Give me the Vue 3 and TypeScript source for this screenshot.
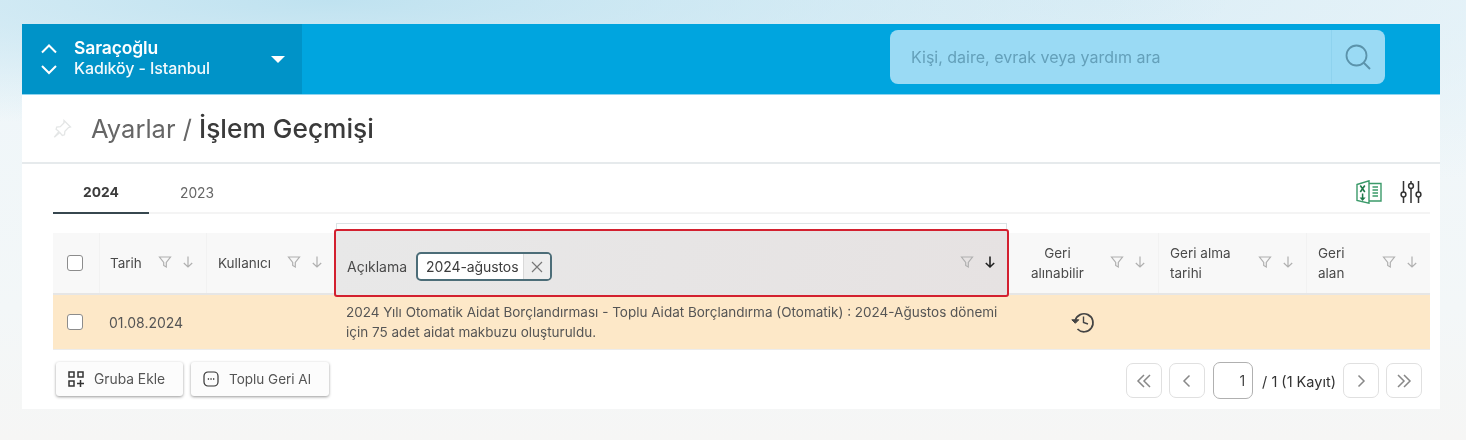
<script setup lang="ts">
interface Column { label: string[]; align?: string }
const columns: Column[] = [
  { label: ['Geri', 'alınabilir'], align: 'center' },
  { label: ['Geri alma', 'tarihi'] },
  { label: ['Geri', 'alan'] },
]
</script>

<template>
  <div class="page">
    <div class="card">
      <header class="topbar">
        <div class="site">
          <div class="arrows">
            <svg width="18" height="11" viewBox="0 0 18 11"><path d="M2 9.500l7-7 7 7" fill="none" stroke="#fff" stroke-width="2" /></svg>
            <svg width="18" height="11" viewBox="0 0 18 11"><path d="M2 2l7 7 7-7" fill="none" stroke="#fff" stroke-width="2" /></svg>
          </div>
          <div class="site-text">
            <div class="site-name">Saraçoğlu</div>
            <div class="site-place">Kadıköy - Istanbul</div>
          </div>
          <span class="caret"></span>
        </div>
        <div class="search">
          <span class="search-text">Kişi, daire, evrak veya yardım ara</span>
          <span class="search-btn">
            <svg width="28" height="28" viewBox="0 0 28 28"><circle cx="12.5" cy="12.5" r="10" fill="none" stroke="#5b93ab" stroke-width="1.8" /><path d="M19.5 19.5l6.500 6.500" stroke="#5b93ab" stroke-width="2" fill="none" /></svg>
          </span>
        </div>
      </header>

      <div class="titlebar">
        <svg class="pin" width="20" height="20" viewBox="0 0 20 20"><path d="M12 1.500l6.500 6.500-2 .6-3.600 3.600-.4 3.600-2.200.6-2.400-2.800-5.600 4.600 4.600-5.600-2.800-2.400.6-2.200 3.600-.4 3.600-3.600z" fill="none" stroke="#e4e6e6" stroke-width="1.300" /></svg>
        <h1 class="title"><span class="crumb">Ayarlar / </span>İşlem Geçmişi</h1>
      </div>

      <div class="content">
        <div class="tabs">
          <div class="tab active">2024</div>
          <div class="tab">2023</div>
          <div class="tools">
            <svg width="26" height="24" viewBox="0 0 26 24">
              <path d="M1 4.500L13 .8v22.400L1 20.500z" fill="#fff" stroke="#3b9a6a" stroke-width="1.400" />
              <path d="M13 3.500h12v17.500H13" fill="none" stroke="#3b9a6a" stroke-width="1.400" />
              <path d="M16.500 7h5.500M16.500 10h5.500M16.500 13h5.500M16.500 16h5.500" stroke="#3b9a6a" stroke-width="1.300" />
              <path d="M4.300 5.500l4.500 6.500M8.800 5.500l-4.500 6.500" stroke="#1f7a4a" stroke-width="1.600" />
              <path d="M6.600 13.500v5" stroke="#1f7a4a" stroke-width="1.500" />
              <path d="M3.600 17.500h6l-3 3.500z" fill="#1f7a4a" />
            </svg>
            <svg width="22" height="24" viewBox="0 0 22 24" fill="none" stroke="#333" stroke-width="1.500">
              <path d="M3.500 1v11M3.500 17v6M11 1v2.500M11 8.500V23M18.500 1v11M18.500 17v6" />
              <circle cx="3.500" cy="14.500" r="2.400" />
              <circle cx="11" cy="6" r="2.400" />
              <circle cx="18.500" cy="14.500" r="2.400" />
            </svg>
          </div>
        </div>

        <div class="table">
          <div class="head-row">
            <div class="cell check-cell"><span class="checkbox"></span></div>
            <div class="cell head-cell tarih">
              <span class="head-label">Tarih</span>
              <span class="head-icons">
                <svg class="ic" viewBox="0 0 14 14"><path d="M1.500 2h11L8.300 7.500v4.500L5.700 10.500v-3z" /></svg>
                <svg class="ic" viewBox="0 0 14 14"><path d="M7 1.500v10.500M2.800 8l4.200 4 4.200-4" /></svg>
              </span>
            </div>
            <div class="cell head-cell">
              <span class="head-label">Kullanıcı</span>
              <span class="head-icons">
                <svg class="ic" viewBox="0 0 14 14"><path d="M1.500 2h11L8.300 7.500v4.500L5.700 10.500v-3z" /></svg>
                <svg class="ic" viewBox="0 0 14 14"><path d="M7 1.500v10.500M2.800 8l4.200 4 4.200-4" /></svg>
              </span>
            </div>
            <div class="cell head-cell desc-head">
              <div class="desc-top"></div>
              <div class="desc-box">
                <span class="desc-label">Açıklama</span>
                <span class="chip"><span class="chip-text">2024-ağustos</span><span class="chip-x"><svg width="12" height="12" viewBox="0 0 12 12"><path d="M1 1l10 10M11 1L1 11" stroke="#777" stroke-width="1.200" /></svg></span></span>
                <span class="head-icons desc-icons">
                  <svg class="ic" viewBox="0 0 14 14"><path d="M1.500 2h11L8.300 7.500v4.500L5.700 10.500v-3z" /></svg>
                  <svg class="ic dark" viewBox="0 0 14 14"><path d="M7 1.500v10.500M2.800 8l4.200 4 4.200-4" /></svg>
                </span>
              </div>
            </div>
            <div v-for="c in columns" :key="c.label.join()" class="cell head-cell">
              <span class="head-label" :class="{ centered: c.align === 'center' }"><span v-for="l in c.label" :key="l" class="line">{{ l }}</span></span>
              <span class="head-icons">
                <svg class="ic" viewBox="0 0 14 14"><path d="M1.500 2h11L8.300 7.500v4.500L5.700 10.500v-3z" /></svg>
                <svg class="ic" viewBox="0 0 14 14"><path d="M7 1.500v10.500M2.800 8l4.200 4 4.200-4" /></svg>
              </span>
            </div>
          </div>
          <div class="body-row">
            <div class="cell check-cell"><span class="checkbox"></span></div>
            <div class="cell date">01.08.2024</div>
            <div class="cell"></div>
            <div class="cell desc">2024 Yılı Otomatik Aidat Borçlandırması - Toplu Aidat Borçlandırma (Otomatik) : 2024-Ağustos dönemi için 75 adet aidat makbuzu oluşturuldu.</div>
            <div class="cell restore">
              <svg width="24" height="24" viewBox="0 0 24 24" fill="none" stroke="#444" stroke-width="1.700">
                <path d="M4.300 10.500A9 9 0 1 1 6.500 19" />
                <path d="M.8 9.800l3.500 3.500 3.500-3.500z" fill="#444" stroke-width="1" />
                <path d="M12.500 6.500v6l4.500 1.500" stroke-width="1.400" />
              </svg>
            </div>
            <div class="cell"></div>
            <div class="cell"></div>
          </div>
        </div>

        <div class="footer">
          <div class="actions">
            <button class="act first">
              <svg width="16" height="16" viewBox="0 0 16 16" fill="none" stroke="#333" stroke-width="1.500"><rect x="1" y="1" width="5" height="5" /><rect x="10" y="1" width="5" height="5" /><rect x="1" y="10" width="5" height="5" /><path d="M12.500 9v7M9 12.500h7" /></svg>
              Gruba Ekle
            </button>
            <button class="act wide">
              <svg width="16" height="16" viewBox="0 0 16 16" fill="none" stroke="#333" stroke-width="1.200"><rect x="1" y="1" width="14" height="14" rx="4" /><path d="M4.800 8h1.300M7.400 8h1.300M10 8h1.300" stroke-width="1.400" /></svg>
              Toplu Geri Al
            </button>
          </div>
          <div class="pager">
            <button class="pg"><svg width="18" height="16" viewBox="0 0 18 16" class="chev"><path d="M9 2L3 8l6 6M15 2L9 8l6 6" /></svg></button>
            <button class="pg"><svg width="18" height="16" viewBox="0 0 18 16" class="chev"><path d="M11.500 2.500L6 8l5.500 5.500" /></svg></button>
            <span class="page-input">1</span>
            <span class="page-info">/ 1 (1 Kayıt)</span>
            <button class="pg next"><svg width="18" height="16" viewBox="0 0 18 16" class="chev"><path d="M6.500 2.500L12 8l-5.500 5.500" /></svg></button>
            <button class="pg"><svg width="18" height="16" viewBox="0 0 18 16" class="chev"><path d="M3 2l6 6-6 6M9 2l6 6-6 6" /></svg></button>
          </div>
        </div>
      </div>
    </div>
  </div>
</template>

<style>
html, body { margin: 0; }
</style>

<style scoped>
.page {
  width: 1466px;
  height: 440px;
  box-sizing: border-box;
  padding: 24px 26px 0 22px;
  overflow: hidden;
  font-family: Inter, "Liberation Sans", sans-serif;
  background:
    radial-gradient(ellipse 900px 130px at 330px 0, #bfe2f0 0%, rgba(191, 226, 240, 0) 100%),
    radial-gradient(ellipse 800px 200px at 1100px 0, #dceef6 0%, rgba(220, 238, 246, 0) 100%),
    linear-gradient(180deg, #eef6fa 0%, #f3f7f8 70%, #f6f6f5 100%);
}
.card { background: #fff; height: 385px; filter: blur(0.35px); }
.topbar {
  height: 70px;
  background: #00a5df;
  display: flex;
  justify-content: space-between;
  border-bottom: 1px solid #8fd4ef;
  box-sizing: content-box;
}
.site {
  width: 280px;
  box-sizing: border-box;
  background: #0093c8;
  display: flex;
  align-items: center;
  padding-left: 18px;
  color: #fff;
}
.arrows { display: flex; flex-direction: column; gap: 10px; width: 34px; }
.arrows svg { display: block; }
.site-text { flex: 1; margin-top: -3px; }
.site-name { font-size: 17.500px; font-weight: 600; line-height: 21px; letter-spacing: -0.15px; }
.site-place { font-size: 16px; font-weight: 500; line-height: 21px; letter-spacing: -0.1px; opacity: 0.95; }
.caret {
  width: 0; height: 0;
  border-left: 7px solid transparent;
  border-right: 7px solid transparent;
  border-top: 7px solid #fff;
  margin-right: 17px;
}
.search {
  width: 495px;
  height: 54px;
  margin: 6px 55px 0 0;
  background: #9adaf4;
  border-radius: 8px;
  display: flex;
  justify-content: space-between;
  align-items: center;
}
.search-text { padding-left: 21px; color: #64a0ba; font-size: 16px; }
.search-btn {
  width: 54px;
  height: 54px;
  padding-right: 2px;
  display: flex;
  align-items: center;
  justify-content: center;
  border-left: 1px solid #8ed2ee;
  box-sizing: border-box;
}
.titlebar {
  height: 67px;
  display: flex;
  align-items: center;
  padding-left: 30px;
  border-bottom: 2px solid #e6eaec;
}
.pin { margin-right: 19px; }
.title { margin: 0; font-size: 26.300px; font-weight: 500; color: #3a3a3a; }
.crumb { font-size: 25.500px; font-weight: 400; color: #666; }
.content { padding: 0 10px 0 31px; }
.tabs {
  display: flex;
  align-items: center;
  height: 50px;
  border-bottom: 2px solid #f4f4f4;
  box-sizing: border-box;
}
.tab {
  width: 96px;
  height: 48px;
  padding-top: 9px;
  box-sizing: border-box;
  display: flex;
  align-items: center;
  justify-content: center;
  font-size: 13.800px;
  color: #666;
}
.active {
  font-weight: 700;
  color: #3c3c3c;
  border-bottom: 2px solid #37474f;
  padding-top: 7px;
  height: 50px;
  position: relative;
  top: 1px;
}
.tools { margin-left: auto; display: flex; align-items: center; gap: 18px; padding: 7px 8px 0 0; }
.tools svg { display: block; }
.table { margin-top: 19px; font-size: 13.500px; color: #4a4a4a; }
.head-row, .body-row {
  display: grid;
  grid-template-columns: 46px 107px 129px 673px 150px 148px 124px;
}
.head-row { height: 62px; box-sizing: border-box; background: #f8f8f8; border-bottom: 2px solid #e6e6e6; }
.body-row { height: 55px; box-sizing: border-box; background: #fde8c8; border-bottom: 1px solid #ececec; }
.cell { display: flex; align-items: center; box-sizing: border-box; min-width: 0; }
.check-cell { justify-content: center; padding-right: 2px; }
.checkbox {
  width: 16px; height: 16px;
  box-sizing: border-box;
  border: 1.500px solid #8c8c8c;
  border-radius: 3px;
  background: #fff;
}
.head-cell { padding: 0 11px 0 11px; border-left: 1px solid #f2f2f2; justify-content: space-between; }
.tarih { padding-left: 10px; }
.head-label { line-height: 20px; }
.head-label .line { display: block; }
.centered { text-align: center; padding-left: 11px; }
.head-icons { display: flex; gap: 9px; margin-top: -3px; }
.ic { width: 14px; height: 14px; fill: none; stroke: #b0b0b0; stroke-width: 1.200; }
.ic.dark { stroke: #222; stroke-width: 1.600; }
.desc-head { position: relative; padding: 0; border: 0; }
.desc-top {
  position: absolute;
  left: 1px; right: 1px; top: -10px; height: 6px;
  border: 1px solid #dbe3e5;
  border-bottom: 0;
  box-sizing: border-box;
}
.desc-box {
  position: absolute;
  inset: -4px -1px -4px -1px;
  box-sizing: border-box;
  border: 2px solid #d3202f;
  border-radius: 3px;
  background: linear-gradient(100deg, #e8e8e8, #e6e2e2);
  display: flex;
  align-items: center;
  padding: 7px 10px 0 11px;
}
.desc-label { margin-right: 9px; font-size: 14px; }
.chip {
  display: flex;
  align-items: stretch;
  height: 29px;
  box-sizing: border-box;
  border: 2px solid #4c6d78;
  border-radius: 5px;
  font-size: 14px;
  color: #3c3c3c;
  overflow: hidden;
  background: #fff;
}
.chip-text { padding: 0 5px 0 8px; display: flex; align-items: center; letter-spacing: -0.1px; }
.chip-x { width: 27px; background: #eeeeee; border-left: 1px solid #d9d9d9; display: flex; align-items: center; justify-content: center; box-sizing: border-box; }
.desc-icons { margin-left: auto; margin-top: -9px; }
.date { padding-left: 10px; font-size: 14px; color: #555; }
.desc { padding: 0 10px 0 11px; line-height: 20px; color: #555; }
.restore { justify-content: center; }
.footer { display: flex; justify-content: space-between; padding-top: 12px; }
.actions { display: flex; gap: 8px; padding-left: 3px; }
.act {
  width: 127px;
  height: 34px;
  border: 0;
  border-radius: 3px;
  background: #fcfcfc;
  box-shadow: 0 1px 3px rgba(0, 0, 0, 0.4);
  display: flex;
  align-items: center;
  gap: 10px;
  padding: 0 0 0 12px;
  font: 13.800px Inter, "Liberation Sans", sans-serif;
  color: #555;
}
.act.wide { width: 138px; font-size: 13.500px; }
.pager { display: flex; align-items: flex-start; gap: 7px; padding: 1px 8px 0 0; }
.pg {
  width: 36px;
  height: 35px;
  padding: 0;
  border: 1.500px solid #e0e0e0;
  border-radius: 7px;
  background: #fff;
  display: flex;
  align-items: center;
  justify-content: center;
}
.chev { fill: none; stroke: #888; stroke-width: 1.500; }
.page-input {
  width: 40px;
  height: 37px;
  margin: -1px 0 0 1px;
  box-sizing: border-box;
  border: 1.500px solid #b0b0b0;
  border-radius: 7px;
  text-align: right;
  padding: 9px 7px 0 0;
  font-size: 14px;
  color: #444;
}
.page-info { font-size: 14.500px; color: #333; line-height: 37px; margin-left: 2px; white-space: nowrap; }
</style>
